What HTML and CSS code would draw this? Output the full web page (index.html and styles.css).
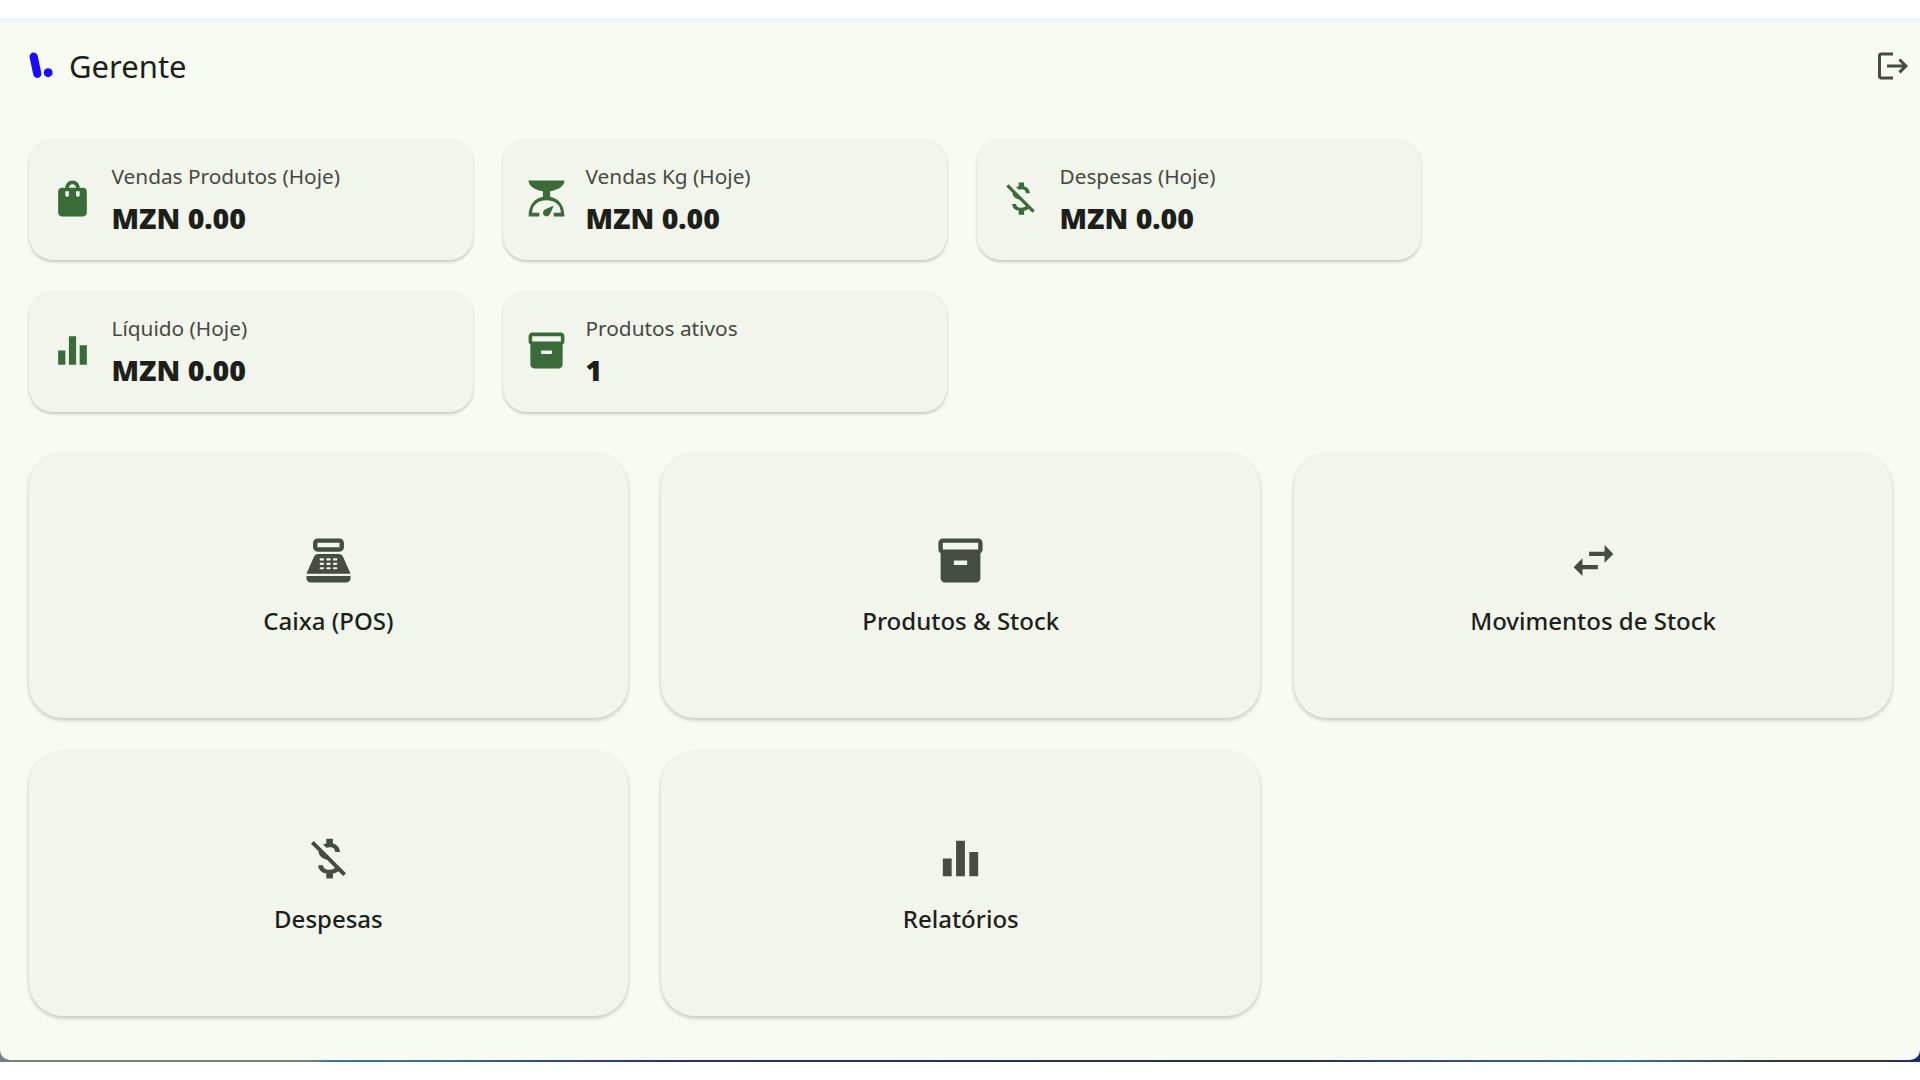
FILE: index.html

```html
<!DOCTYPE html>
<html lang="pt">
<head>
  <meta charset="UTF-8" />
  <title>Gerente</title>
  <link rel="stylesheet" href="styles.css">
</head>
<body>
  <div class="wall">
    <div class="app">
      <header class="topbar">
        <div class="brand">
          <svg class="logo" viewBox="0 0 28 28"><path d="M4.500 4.500 L8 21" /><circle cx="18.500" cy="20" r="4.300" /></svg>
          <h1>Gerente</h1>
        </div>
        <svg class="logout" viewBox="0 0 24 24"><path d="M17 7l-1.410 1.410L18.170 11H8v2h10.170l-2.580 2.580L17 17l5-5zM4 5h8V3H4c-1.100 0-2 .9-2 2v14c0 1.100.9 2 2 2h8v-2H4V5z"/></svg>
      </header>

      <section class="stats">
        <div class="stat">
          <svg class="stat-icon" viewBox="0 0 24 24"><path d="M18 6h-2c0-2.210-1.790-4-4-4S8 3.790 8 6H6c-1.100 0-2 .9-2 2v12c0 1.100.9 2 2 2h12c1.100 0 2-.9 2-2V8c0-1.100-.9-2-2-2zm-8 4c0 .55-.45 1-1 1s-1-.45-1-1V8h2v2zm2-6c1.100 0 2 .9 2 2h-4c0-1.100.9-2 2-2zm4 6c0 .55-.45 1-1 1s-1-.45-1-1V8h2v2z"/></svg>
          <div>
            <p class="stat-label">Vendas Produtos (Hoje)</p>
            <p class="stat-value">MZN 0.00</p>
          </div>
        </div>
        <div class="stat">
          <svg class="stat-icon" viewBox="0 0 24 24"><path d="M14 11V8c4.560-.58 8-3.100 8-6H2c0 2.900 3.440 5.420 8 6v3c-3.680.73-8 3.610-8 11h6v-2H4c0-5 3.970-7 8-7s8 2 8 7h-4v2h6c0-7.390-4.320-10.270-8-11zM12 22c-1.100 0-2-.9-2-2 0-.55.23-1.050.59-1.410C11.390 17.790 16 16 16 16s-1.790 4.610-2.590 5.410c-.36.36-.86.59-1.410.59z"/></svg>
          <div>
            <p class="stat-label">Vendas Kg (Hoje)</p>
            <p class="stat-value">MZN 0.00</p>
          </div>
        </div>
        <div class="stat">
          <svg class="stat-icon" viewBox="0 0 24 24"><path d="M12.500 6.900c1.780 0 2.440.85 2.500 2.100h2.210c-.07-1.720-1.120-3.300-3.210-3.810V3h-3v2.160c-.53.12-1.030.3-1.480.54l1.470 1.470c.41-.17.91-.27 1.510-.27zM5.330 4.060 4.060 5.330 7.500 8.770c0 2.080 1.560 3.210 3.910 3.910l3.510 3.510c-.34.48-1.050.91-2.420.91-2.060 0-2.870-.92-2.980-2.100h-2.200c.12 2.190 1.760 3.420 3.680 3.830V21h3v-2.150c.96-.18 1.820-.55 2.450-1.120l2.220 2.220 1.270-1.270L5.330 4.060z"/></svg>
          <div>
            <p class="stat-label">Despesas (Hoje)</p>
            <p class="stat-value">MZN 0.00</p>
          </div>
        </div>
        <div class="stat">
          <svg class="stat-icon" viewBox="0 0 24 24"><path d="M4 12h4v8H4zM10 4h4v16h-4zM16 9h4v11h-4z"/></svg>
          <div>
            <p class="stat-label">Líquido (Hoje)</p>
            <p class="stat-value">MZN 0.00</p>
          </div>
        </div>
        <div class="stat">
          <svg class="stat-icon" viewBox="0 0 24 24"><path d="M20 2H4c-1 0-2 .9-2 2v3.010c0 .72.43 1.340 1 1.690V20c0 1.100 1.100 2 2 2h14c.9 0 2-.9 2-2V8.700c.57-.35 1-.97 1-1.690V4c0-1.100-1-2-2-2zm-5 12H9v-2h6v2zm5-7H4V4l16-.02V7z"/></svg>
          <div>
            <p class="stat-label">Produtos ativos</p>
            <p class="stat-value">1</p>
          </div>
        </div>
      </section>

      <section class="menu">
        <div class="tile">
          <svg class="tile-icon" viewBox="0 0 24 24"><path d="M17 2H7c-1.100 0-2 .9-2 2v2c0 1.100.9 2 2 2h10c1.100 0 2-.9 2-2V4c0-1.100-.9-2-2-2zm0 4H7V4h10v2zm3 16H4c-1.100 0-2-.9-2-2v-1h20v1c0 1.100-.9 2-2 2zm-1.470-11.810C18.210 9.470 17.490 9 16.700 9H7.300c-.79 0-1.510.47-1.830 1.190L2 18h20l-3.470-7.810zM9.500 16h-1c-.28 0-.5-.22-.5-.5s.22-.5.5-.5h1c.28 0 .5.22.5.5s-.22.5-.5.5zm0-2h-1c-.28 0-.5-.22-.5-.5s.22-.5.5-.5h1c.28 0 .5.22.5.5s-.22.5-.5.5zm0-2h-1c-.28 0-.5-.22-.5-.5s.22-.5.5-.5h1c.28 0 .5.22.5.5s-.22.5-.5.5zm3 4h-1c-.28 0-.5-.22-.5-.5s.22-.5.5-.5h1c.28 0 .5.22.5.5s-.22.5-.5.5zm0-2h-1c-.28 0-.5-.22-.5-.5s.22-.5.5-.5h1c.28 0 .5.22.5.5s-.22.5-.5.5zm0-2h-1c-.28 0-.5-.22-.5-.5s.22-.5.5-.5h1c.28 0 .5.22.5.5s-.22.5-.5.5zm3 4h-1c-.28 0-.5-.22-.5-.5s.22-.5.5-.5h1c.28 0 .5.22.5.5s-.22.5-.5.5zm0-2h-1c-.28 0-.5-.22-.5-.5s.22-.5.5-.5h1c.28 0 .5.22.5.5s-.22.5-.5.5zm0-2h-1c-.28 0-.5-.22-.5-.5s.22-.5.5-.5h1c.28 0 .5.22.5.5s-.22.5-.5.5z"/></svg>
          <span class="tile-label">Caixa (POS)</span>
        </div>
        <div class="tile">
          <svg class="tile-icon" viewBox="0 0 24 24"><path d="M20 2H4c-1 0-2 .9-2 2v3.010c0 .72.43 1.340 1 1.690V20c0 1.100 1.100 2 2 2h14c.9 0 2-.9 2-2V8.700c.57-.35 1-.97 1-1.690V4c0-1.100-1-2-2-2zm-5 12H9v-2h6v2zm5-7H4V4l16-.02V7z"/></svg>
          <span class="tile-label">Produtos &amp; Stock</span>
        </div>
        <div class="tile">
          <svg class="tile-icon" viewBox="0 0 24 24"><path d="M6.990 11 3 15l3.990 4v-3H14v-2H6.990v-3zM21 9l-4-4v3h-7v2h7v3l4-4z"/></svg>
          <span class="tile-label">Movimentos de Stock</span>
        </div>
        <div class="tile">
          <svg class="tile-icon" viewBox="0 0 24 24"><path d="M12.500 6.900c1.780 0 2.440.85 2.500 2.100h2.210c-.07-1.720-1.120-3.300-3.210-3.810V3h-3v2.160c-.53.12-1.030.3-1.480.54l1.470 1.470c.41-.17.91-.27 1.510-.27zM5.330 4.060 4.060 5.330 7.500 8.770c0 2.080 1.560 3.210 3.910 3.910l3.510 3.510c-.34.48-1.050.91-2.420.91-2.060 0-2.870-.92-2.980-2.100h-2.200c.12 2.190 1.760 3.420 3.680 3.830V21h3v-2.150c.96-.18 1.820-.55 2.450-1.120l2.220 2.220 1.270-1.270L5.330 4.060z"/></svg>
          <span class="tile-label">Despesas</span>
        </div>
        <div class="tile">
          <svg class="tile-icon" viewBox="0 0 24 24"><path d="M4 12h4v8H4zM10 4h4v16h-4zM16 9h4v11h-4z"/></svg>
          <span class="tile-label">Relatórios</span>
        </div>
      </section>
    </div>
  </div>
</body>
</html>
```

FILE: styles.css

```css
* {
  box-sizing: border-box;
}
html, body {
  margin: 0;
  height: 100%;
  background: #fff;
  overflow: hidden;
}
body {
  padding-top: 18px;
  font-family: "Noto Sans", "Open Sans", sans-serif;
}
/* desktop wallpaper only shows through at the bottom edge and corners */
.wall {
  height: 1044px;
  padding-bottom: 2px;
  background: linear-gradient(to right,
    #777f80 0, #777f80 312px, #3d7399 330px, #3a6a9a 450px, #2f4a80 550px, #2c2f6e 680px,
    #2a2f40 1220px, #2a2f40 1310px, #2f4470 1400px, #3d7399 1620px, #333 1780px, #333 1880px, #1a2a80 1920px);
}
.app {
  height: 100%;
  background: #f8fbf1;
  border-top: 5px solid #eef4fb;
  border-radius: 0 0 10px 10px;
  padding: 0 27.500px 0 29px;
}
.topbar {
  height: 86px;
  margin-bottom: 29px;
  display: flex;
  align-items: center;
  justify-content: space-between;
}
.brand {
  display: flex;
  align-items: center;
  gap: 11px;
}
.logo {
  width: 29px;
  height: 29px;
  fill: #1a0dff;
  stroke: #1a0dff;
}
.logo path {
  fill: none;
  stroke-width: 8;
  stroke-linecap: round;
}
.logo circle {
  stroke: none;
}
.brand h1 {
  margin: 0;
  font-size: 31px;
  font-weight: 400;
  color: #1c1f1a;
}
.logout {
  width: 36px;
  height: 36px;
  margin-right: -18px;
  fill: #444c44;
}
.stats {
  display: flex;
  flex-wrap: wrap;
  gap: 30.500px 30px;
  margin-bottom: 41px;
}
.stat {
  width: 444px;
  height: 121.500px;
  display: flex;
  align-items: center;
  gap: 17.500px;
  padding: 0 22px;
  background: #f2f5ec;
  border-radius: 24px;
  box-shadow: 0 2px 3px rgba(0, 0, 0, .2);
}
.stat-icon {
  width: 43px;
  height: 43px;
  flex: none;
  fill: #3a6b38;
}
.stat-label {
  margin: 0 0 10px;
  font-size: 20.800px;
  line-height: 28px;
  color: #444a42;
}
.stat-value {
  margin: 0;
  font-size: 28.500px;
  line-height: 36px;
  font-weight: 900;
  color: #1c1f1a;
}
.menu {
  display: grid;
  grid-template-columns: repeat(3, 1fr);
  grid-auto-rows: 265px;
  gap: 33px 33.500px;
}
.tile {
  display: flex;
  flex-direction: column;
  align-items: center;
  padding-top: 81px;
  background: #f2f5ec;
  border-radius: 34px;
  box-shadow: 0 2px 4px rgba(0, 0, 0, .22);
}
.tile-icon {
  width: 53px;
  height: 53px;
  fill: #444c44;
}
.tile-label {
  margin-top: 18px;
  font-size: 24px;
  line-height: 32px;
  font-weight: 500;
  color: #1c1f1a;
}
```
